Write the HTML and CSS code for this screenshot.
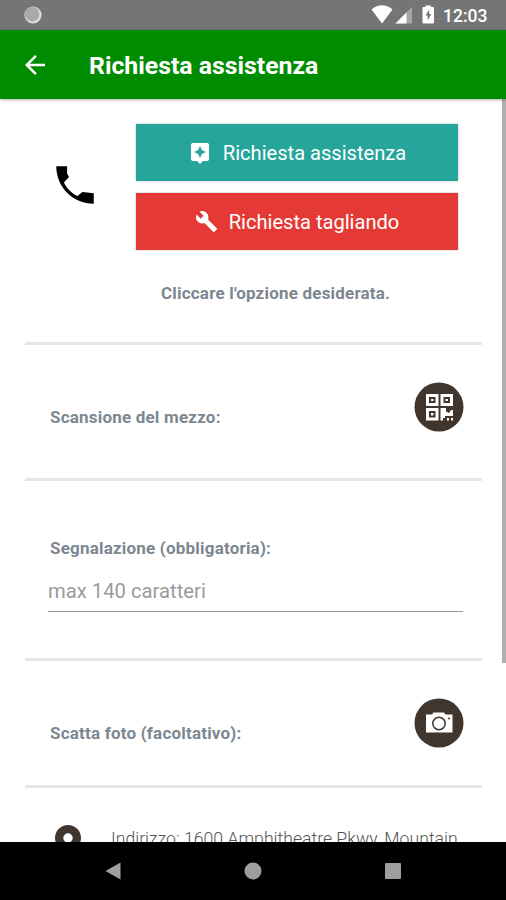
FILE: index.html
```html
<!DOCTYPE html>
<html lang="it">
<head>
<meta charset="utf-8">
<title>Richiesta assistenza</title>
<link rel="stylesheet" href="styles.css">
</head>
<body>
<div class="screen">
  <div class="status">
    <svg class="status-sync" width="18" height="18" viewBox="0 0 18 18"><circle cx="9" cy="9" r="8.6" fill="#dedede"/><circle cx="8.2" cy="8.2" r="7.2" fill="#a9a9a9"/></svg>
    <svg class="status-icons" width="66" height="20" viewBox="0 0 66 20">
      <path d="M.5 4.5Q11 -3.8 21.500 4.500L11 18.500Z" fill="#fff"/>
      <path d="M41 2V18.500H24.500Z" fill="#a6a6a6"/><path d="M35.500 7.500V18.500H24.500Z" fill="#fff"/>
      <path d="M54.500 2V.5H60V2H62Q63 2 63 3.200V17.300Q63 18.500 61.800 18.500H52.700Q51.500 18.500 51.500 17.300V3.200Q51.500 2 52.500 2Z" fill="#fff"/>
      <path d="M58.200 4.500L54.500 10.500H56.700V15.500L60.200 9H58.200Z" fill="#757575"/>
    </svg>
    <span class="clock">12:03</span>
  </div>
  <header class="bar">
    <svg width="30" height="30" viewBox="0 0 24 24" fill="#fff"><path d="M20 11H7.830l5.590-5.590L12 4l-8 8 8 8 1.410-1.410L7.830 13H20v-2z"/></svg>
    <h1>Richiesta assistenza</h1>
  </header>
  <main class="content">
    <section class="options">
      <div class="options-row">
        <svg class="phone" width="50" height="50" viewBox="0 0 24 24"><path d="M3 3H8.200V6.500L9.100 8.200 6.700 10.800C8 13.700 10.500 16 13.200 17.300L15.600 15.300 21 15.900V21C11 21 3 13 3 3Z"/></svg>
        <div class="buttons">
          <button class="btn teal"><svg width="24" height="24" viewBox="0 0 24 24" fill="#fff"><path d="M19 2H5c-1.110 0-2 .9-2 2v14c0 1.100.89 2 2 2h4l3 3 3-3h4c1.100 0 2-.9 2-2V4c0-1.100-.9-2-2-2zm-5.120 10.880L12 17l-1.880-4.120L6 11l4.120-1.880L12 5l1.880 4.120L18 11l-4.120 1.880z"/></svg><span>Richiesta assistenza</span></button>
          <button class="btn red"><svg width="23" height="23" viewBox="0 0 24 24" fill="#fff"><path d="M22.700 19l-9.100-9.100c.9-2.300.4-5-1.500-6.900-2-2-5-2.400-7.400-1.300L9 6 6 9 1.600 4.700C.4 7.100.9 10.100 2.900 12.100c1.900 1.900 4.600 2.400 6.900 1.500l9.100 9.100c.4.400 1 .4 1.400 0l2.300-2.300c.5-.4.5-1.100.1-1.400z"/></svg><span>Richiesta tagliando</span></button>
        </div>
      </div>
      <p class="label hint">Cliccare l'opzione desiderata.</p>
    </section>
    <section class="scan">
      <span class="label scan-label">Scansione del mezzo:</span>
      <svg width="50" height="50" viewBox="0 0 50 50">
        <circle cx="25" cy="25" r="24.500" fill="#40362e"/>
        <path d="M12 12h12.500v12H12zM26.500 12H39v12H26.500zM12 26h12.500v12.500H12zM26.500 26h5.500v3.500l3 1.500 2-3h2v6h-8v2h-2v2.500h-2.500zM33 36h2v2.500h-2zM37 36h2v2.500h-2z" fill="#fff"/>
        <path d="M15 15h6.500v6H15zM29.500 15H36v6h-6.500zM15 29h6.500v6.500H15z" fill="#40362e"/>
        <path d="M17 17h2.500v2H17zM31.500 17H34v2h-2.500zM17 31h2.500v2.500H17z" fill="#fff"/>
      </svg>
    </section>
    <section class="report">
      <label class="label" for="report">Segnalazione (obbligatoria):</label>
      <input id="report" type="text" maxlength="140" placeholder="max 140 caratteri">
    </section>
    <section class="photo">
      <span class="label photo-label">Scatta foto (facoltativo):</span>
      <svg width="50" height="50" viewBox="0 0 50 50">
        <circle cx="25" cy="25" r="24.500" fill="#40362e"/>
        <path d="M12 16.500H18L19.500 14.500H30L31.500 16.500H38.500V34.500H12Z" fill="#fff"/>
        <circle cx="25" cy="25.500" r="6.200" fill="none" stroke="#40362e" stroke-width="1.500"/><circle cx="35" cy="20.500" r="1" fill="#40362e"/>
      </svg>
    </section>
    <section class="address">
      <svg width="26" height="38" viewBox="0 0 26 38"><path d="M13 0A13 13 0 0 0 0 13C0 22 13 37 13 37S26 22 26 13A13 13 0 0 0 13 0ZM13 8.300A4.700 4.700 0 1 1 13 17.700A4.700 4.700 0 0 1 13 8.300Z" fill="#40362e"/></svg>
      <p>Indirizzo: 1600 Amphitheatre Pkwy, Mountain</p>
    </section>
    <div class="scrollbar"></div>
  </main>
  <nav class="nav">
    <svg width="18" height="18" viewBox="0 0 18 18" fill="#9e9e9e"><path d="M1.500 9L16.500 .5V17.500Z"/></svg>
    <svg width="18" height="18" viewBox="0 0 18 18" fill="#9e9e9e"><circle cx="9" cy="9" r="8.500"/></svg>
    <svg width="18" height="18" viewBox="0 0 18 18" fill="#9e9e9e"><rect x="1" y="1" width="16" height="16" rx="1"/></svg>
  </nav>
</div>
</body>
</html>
```
FILE: styles.css
```css
* { box-sizing: border-box; }
body { margin: 0; font-family: Roboto, "Liberation Sans", sans-serif; }
svg { display: block; flex: none; }
.screen { width: 506px; height: 900px; display: flex; flex-direction: column; overflow: hidden; background: #fff; }
.status { height: 30px; flex: none; display: flex; align-items: center; background: #757575; padding: 0 18px 0 24px; }
.status-icons { margin-left: auto; }
.clock { width: 45px; margin-left: 6px; color: #fff; font-size: 17.500px; font-weight: 500; line-height: 20px; padding-top: 2px; white-space: nowrap; }
.bar { height: 69px; flex: none; display: flex; align-items: center; padding: 0 20px; background: #008c00; color: #fff; z-index: 1; box-shadow: 0 1px 3px rgba(0,0,0,.3); }
.bar h1 { margin: 3px 0 0 39px; font-size: 24.800px; font-weight: 700; line-height: 30px; white-space: nowrap; }
.content { height: 743px; flex: none; position: relative; overflow: hidden; padding: 0 24px 0 25px; }
.content section { border-bottom: 3px solid #e6e6e6; }
.label { color: #7c8791; font-size: 17px; font-weight: 700; line-height: 20px; letter-spacing: .2px; white-space: nowrap; }
.options { height: 246px; padding: 25px 24px 0 25px; }
.options-row { display: flex; align-items: center; justify-content: space-between; }
.phone { margin-bottom: 4px; }
.buttons { width: 322px; display: grid; gap: 12px; }
.btn { height: 57px; border: 0; padding: 0; display: flex; align-items: center; justify-content: center; gap: 11px; color: #fff; font: 400 20.100px/28px Roboto, sans-serif; white-space: nowrap; box-shadow: 0 0 2px rgba(0,0,0,.3); }
.btn span { padding-top: 1px; }
.teal { background: #26a69a; }
.red { background: #e53935; }
.hint { margin: 33px 0 0 111px; }
.scan { height: 136px; display: flex; justify-content: space-between; padding: 37px 18px 0 25px; }
.scan-label { margin-top: 25px; }
.report { height: 180px; display: flex; flex-direction: column; padding: 57px 19px 0 23px; }
.report .label { margin-left: 2px; }
.report input { width: 100%; height: 41px; margin-top: 13px; padding: 0; border: 0; border-bottom: 1.500px solid #9a9a9a; outline: 0; background: none; font: 400 20.250px/24px Roboto, sans-serif; }
.report input::placeholder { color: #9b9b9b; opacity: 1; }
.photo { height: 127px; display: flex; justify-content: space-between; padding: 37px 18px 0 25px; }
.photo-label { margin-top: 25px; }
.content .address { display: flex; gap: 30px; border: 0; padding: 37px 0 0 30px; }
.address p { margin: 2px 0 0; color: #555; font-size: 17.650px; font-weight: 300; line-height: 24px; white-space: nowrap; }
.scrollbar { position: absolute; top: 0; right: 0; width: 4px; height: 564px; background: #b0b0b0; }
.nav { height: 58px; flex: none; display: flex; justify-content: center; align-items: center; gap: 122px; background: #000; }
```
